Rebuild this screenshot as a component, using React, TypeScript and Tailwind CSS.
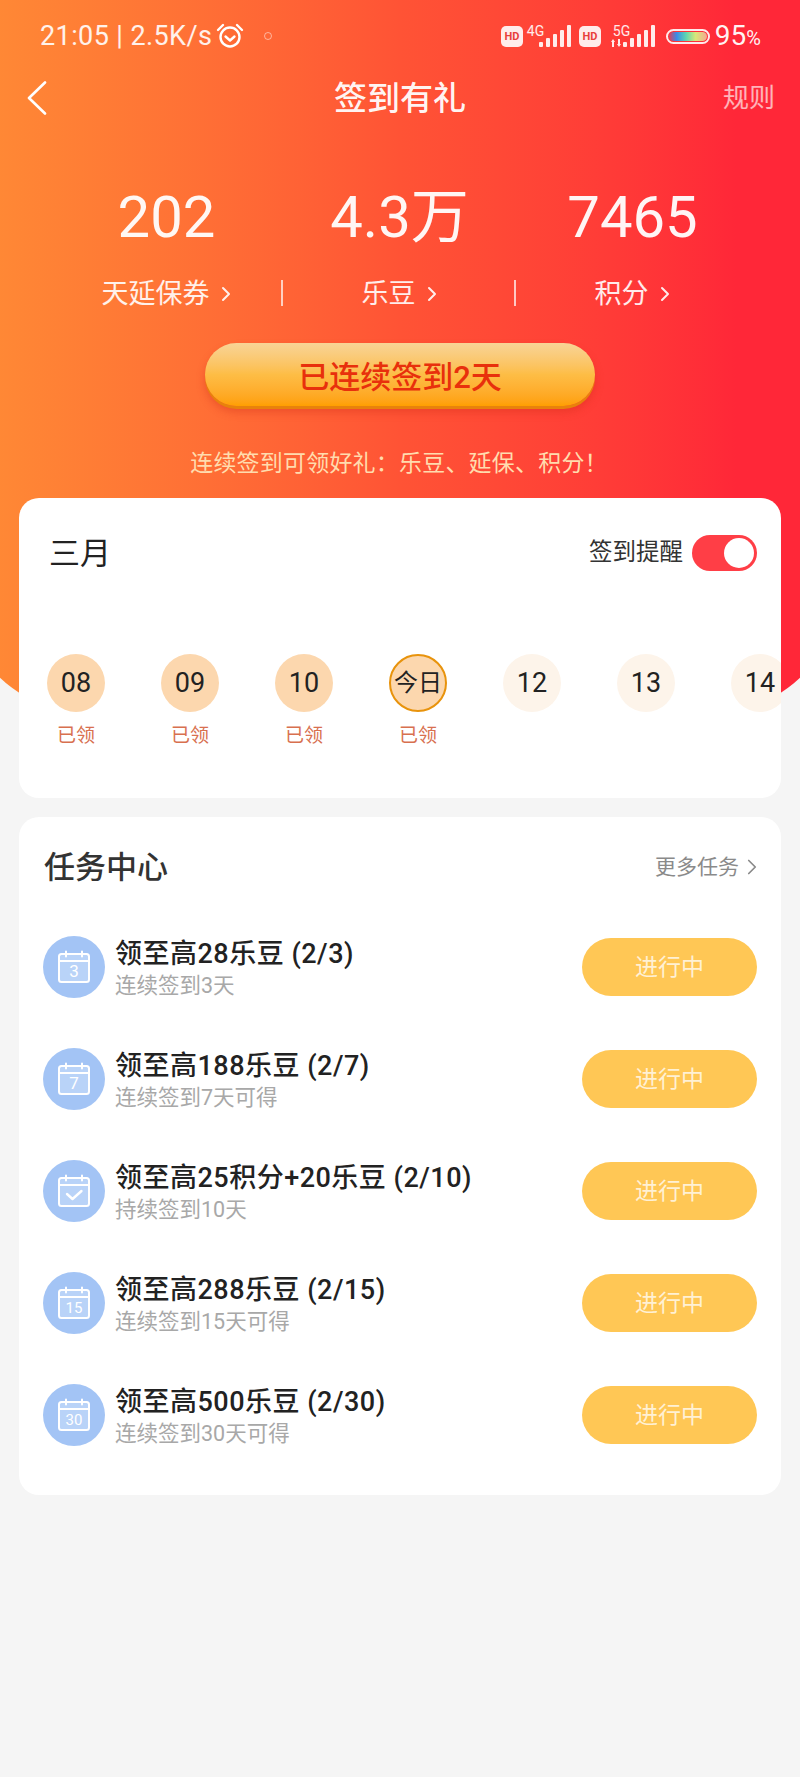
import { ChevronRight } from "lucide-react";

const days = [
  { label: "08", done: true },
  { label: "09", done: true },
  { label: "10", done: true },
  { label: "今日", done: true, today: true },
  { label: "12" },
  { label: "13" },
  { label: "14" },
];

const tasks = [
  { title: "领至高28乐豆 (2/3)", sub: "连续签到3天", mark: "3" },
  { title: "领至高188乐豆 (2/7)", sub: "连续签到7天可得", mark: "7" },
  { title: "领至高25积分+20乐豆 (2/10)", sub: "持续签到10天", mark: "check" },
  { title: "领至高288乐豆 (2/15)", sub: "连续签到15天可得", mark: "15" },
  { title: "领至高500乐豆 (2/30)", sub: "连续签到30天可得", mark: "30" },
];

const stats = [
  { value: "202", label: "天延保券" },
  { value: "4.3万", label: "乐豆" },
  { value: "7465", label: "积分" },
];

const SignalBars = () => (
  <svg width="33" height="22" viewBox="0 0 33 22" fill="#fff" className="opacity-90">
    <rect x="0" y="17" width="4" height="5" rx="1" />
    <rect x="7" y="13" width="4" height="9" rx="1" />
    <rect x="14" y="9" width="4" height="13" rx="1" />
    <rect x="21" y="5" width="4" height="17" rx="1" />
    <rect x="28" y="0" width="4" height="22" rx="1" />
  </svg>
);

const HdBadge = () => (
  <div className="w-[22px] h-[21px] rounded-[5px] bg-white/90 flex items-center justify-center text-[11px] font-bold text-[#e8413c] leading-none">
    HD
  </div>
);

const CalendarIcon = ({ mark }: { mark: string }) => (
  <div className="w-[62px] h-[62px] shrink-0 rounded-full bg-[#a3c4f5] flex items-center justify-center">
    <svg width="34" height="34" viewBox="0 0 34 34" fill="none">
      <rect x="2" y="4" width="30" height="28" rx="2.5" stroke="#fff" strokeWidth="2" fill="#b9d3f8" />
      <path d="M2 11h30" stroke="#fff" strokeWidth="2" />
      <path d="M9 1.5v5M25 1.5v5" stroke="#fff" strokeWidth="2" strokeLinecap="round" />
      {mark === "check" ? (
        <path d="M10 20l5.5 5 9-8" stroke="#fff" strokeWidth="2.4" strokeLinecap="round" strokeLinejoin="round" />
      ) : (
        <text
          x="17"
          y="27"
          textAnchor="middle"
          fontSize={mark.length > 1 ? 15 : 17}
          fill="#fff"
          fontFamily="Roboto, sans-serif"
        >
          {mark}
        </text>
      )}
    </svg>
  </div>
);

export default function App() {
  return (
    <div className="relative w-[800px] h-[1777px] overflow-hidden bg-[#f5f5f5] font-['Roboto','Noto_Sans_CJK_SC',sans-serif]">
      {/* фон шапки */}
      <div className="absolute -left-5 top-0 w-[840px] h-[768px] rounded-b-[420px_130px] bg-linear-to-r from-[#ff8a35] via-[#ff5335] to-[#ff2738] to-90%" />

      <div className="relative">
        {/* статус-бар */}
        <div className="h-[72px] pl-10 pr-[39px] flex items-center justify-between text-white">
          <div className="flex items-center text-[27px] leading-none text-white/90 tracking-[0.4px]">
            <span>21:05 | 2.5K/s</span>
            <svg width="28" height="28" viewBox="0 0 28 28" fill="none" stroke="#fff" strokeWidth="2.4" className="ml-[4px]">
              <circle cx="14" cy="15" r="9.5" />
              <path d="M9.5 14.5l4.5 4 4.5-4" strokeLinecap="round" strokeLinejoin="round" />
              <path d="M2 8l5-5M26 8l-5-5" strokeLinecap="round" />
            </svg>
            <span className="ml-[20px] w-2 h-2 rounded-full border border-white/50" />
          </div>
          <div className="flex items-center">
            <HdBadge />
            <span className="relative ml-[4px] w-[44px] h-[22px]">
              <span className="absolute -top-[1px] left-0 text-[14px] leading-none text-white/90">4G</span>
              <span className="absolute left-[12px] top-0">
                <SignalBars />
              </span>
            </span>
            <span className="ml-[8px]">
              <HdBadge />
            </span>
            <span className="relative ml-[10px] w-[45px] h-[22px]">
              <span className="absolute -top-[1px] left-[2px] text-[14px] leading-none text-white/90">5G</span>
              <svg width="10" height="8" viewBox="0 0 10 8" fill="#fff" className="absolute left-0 bottom-0 opacity-90">
                <path d="M2 0l2 3H3v5H1V3H0zM8 8L6 5h1V0h2v5h1z" />
              </svg>
              <span className="absolute left-[12px] top-0">
                <SignalBars />
              </span>
            </span>
            <div className="ml-[10px] w-[44px] h-[15px] rounded-full border-2 border-white/90 p-[1px]">
              <div className="w-full h-full rounded-full bg-[linear-gradient(90deg,#e0405a,#3a8ae8_20%,#5fd6b0_45%,#d8e878_70%,#f5a890)]" />
            </div>
            <span className="ml-[5px] text-[28px] leading-none text-white/95">
              95<span className="text-[20px]">%</span>
            </span>
          </div>
        </div>

        {/* заголовок */}
        <div className="h-[52px] px-[27px] flex items-center justify-between relative">
          <svg width="20" height="34" viewBox="0 0 20 34" fill="none" stroke="#fff" strokeWidth="2.6" strokeLinecap="round" strokeLinejoin="round">
            <path d="M18 1.5L2 17l16 15.5" />
          </svg>
          <span className="absolute inset-x-0 text-center text-[33px] font-medium text-white/95 leading-none">
            签到有礼
          </span>
          <span className="mr-[-2px] text-[26px] text-white/65 leading-none">规则</span>
        </div>

        {/* счётчики */}
        <div className="mt-[63px] ml-[50px] w-[699px] grid grid-cols-3">
          {stats.map((s, i) => (
            <div key={s.label} className="relative flex flex-col items-center">
              <div className="h-[60px] flex items-center text-[58px] leading-none text-white/95">{s.value}</div>
              <div className="mt-[32px] ml-[6px] h-[30px] flex items-center text-[27px] leading-none text-white/90">
                {s.label}
                <ChevronRight size={24} strokeWidth={2} className="ml-[4px]" />
              </div>
              {i < 2 && <span className="absolute right-0 bottom-[3px] w-[2px] h-[26px] bg-white/70" />}
            </div>
          ))}
        </div>

        {/* кнопка */}
        <div className="mt-[34px] flex justify-center">
          <div className="w-[390px] h-[63px] pt-[5px] rounded-full bg-linear-to-b from-[#f8d496] via-[#fdbd45] to-[#ff9f00] shadow-[0_3px_0_#e8820c,0_6px_8px_rgba(200,40,20,0.35)] flex items-center justify-center text-[31px] font-medium text-[#e8300c] leading-none">
            已连续签到2天
          </div>
        </div>

        <div className="mt-[45px] h-[24px] ml-[-2px] flex items-center justify-center text-[23px] tracking-[0.2px] leading-none text-[#ffdcae]">
          连续签到可领好礼：乐豆、延保、积分！
        </div>

        {/* календарь */}
        <div className="mt-[23px] mx-[19px] h-[300px] rounded-[20px] bg-white overflow-hidden">
          <div className="h-[74px] mt-[18px] pl-[30px] pr-6 flex items-center justify-between">
            <span className="text-[31px] leading-none text-[#222]">三月</span>
            <div className="flex items-center">
              <span className="text-[23.5px] leading-none text-[#333]">签到提醒</span>
              <div className="ml-[9px] w-[65px] h-[36px] rounded-full bg-[#ff3e46] flex items-center justify-end pr-[3px]">
                <div className="w-[30px] h-[30px] rounded-full bg-white" />
              </div>
            </div>
          </div>
          <div className="mt-[64px] pl-[28px] flex gap-[56px]">
            {days.map((d) => (
              <div key={d.label} className="w-[58px] shrink-0 flex flex-col items-center">
                <div
                  className={
                    d.done
                      ? d.today
                        ? "w-[58px] h-[58px] rounded-full bg-[#fcd7ae] border-2 border-[#e8930c] flex items-center justify-center text-[24px] text-[#222] leading-none"
                        : "w-[58px] h-[58px] rounded-full bg-[#fcd7ae] flex items-center justify-center text-[27px] text-[#222] leading-none"
                      : "w-[58px] h-[58px] rounded-full bg-[#fdf4ea] flex items-center justify-center text-[27px] text-[#222] leading-none"
                  }
                >
                  {d.label}
                </div>
                {d.done && <span className="mt-[14px] text-[19px] leading-none text-[#d8704f]">已领</span>}
              </div>
            ))}
          </div>
        </div>

        {/* задачи */}
        <div className="mt-[19px] mx-[19px] h-[678px] rounded-[20px] bg-white pl-6 pr-6">
          <div className="h-[94px] pt-[6px] flex items-center justify-between">
            <span className="ml-[1px] text-[31px] font-medium leading-none text-[#333]">任务中心</span>
            <span className="flex items-center text-[21px] leading-none text-[#8a8a8a] -mr-2">
              更多任务
              <ChevronRight size={26} strokeWidth={1.6} className="-mr-[0px]" />
            </span>
          </div>
          {tasks.map((t) => (
            <div key={t.title} className="h-[112px] flex items-center">
              <CalendarIcon mark={t.mark} />
              <div className="ml-[10px] pt-[3px] flex-1 min-w-0 flex flex-col">
                <span className="text-[27px] font-medium tracking-[0.5px] leading-[32px] text-[#222]">{t.title}</span>
                <span className="mt-[1px] text-[21.5px] leading-[29px] text-[#a8a8a8]">{t.sub}</span>
              </div>
              <div className="w-[175px] h-[58px] shrink-0 rounded-full bg-[#ffc755] flex items-center justify-center text-[23px] leading-none text-white/75">
                进行中
              </div>
            </div>
          ))}
        </div>
      </div>
    </div>
  );
}
